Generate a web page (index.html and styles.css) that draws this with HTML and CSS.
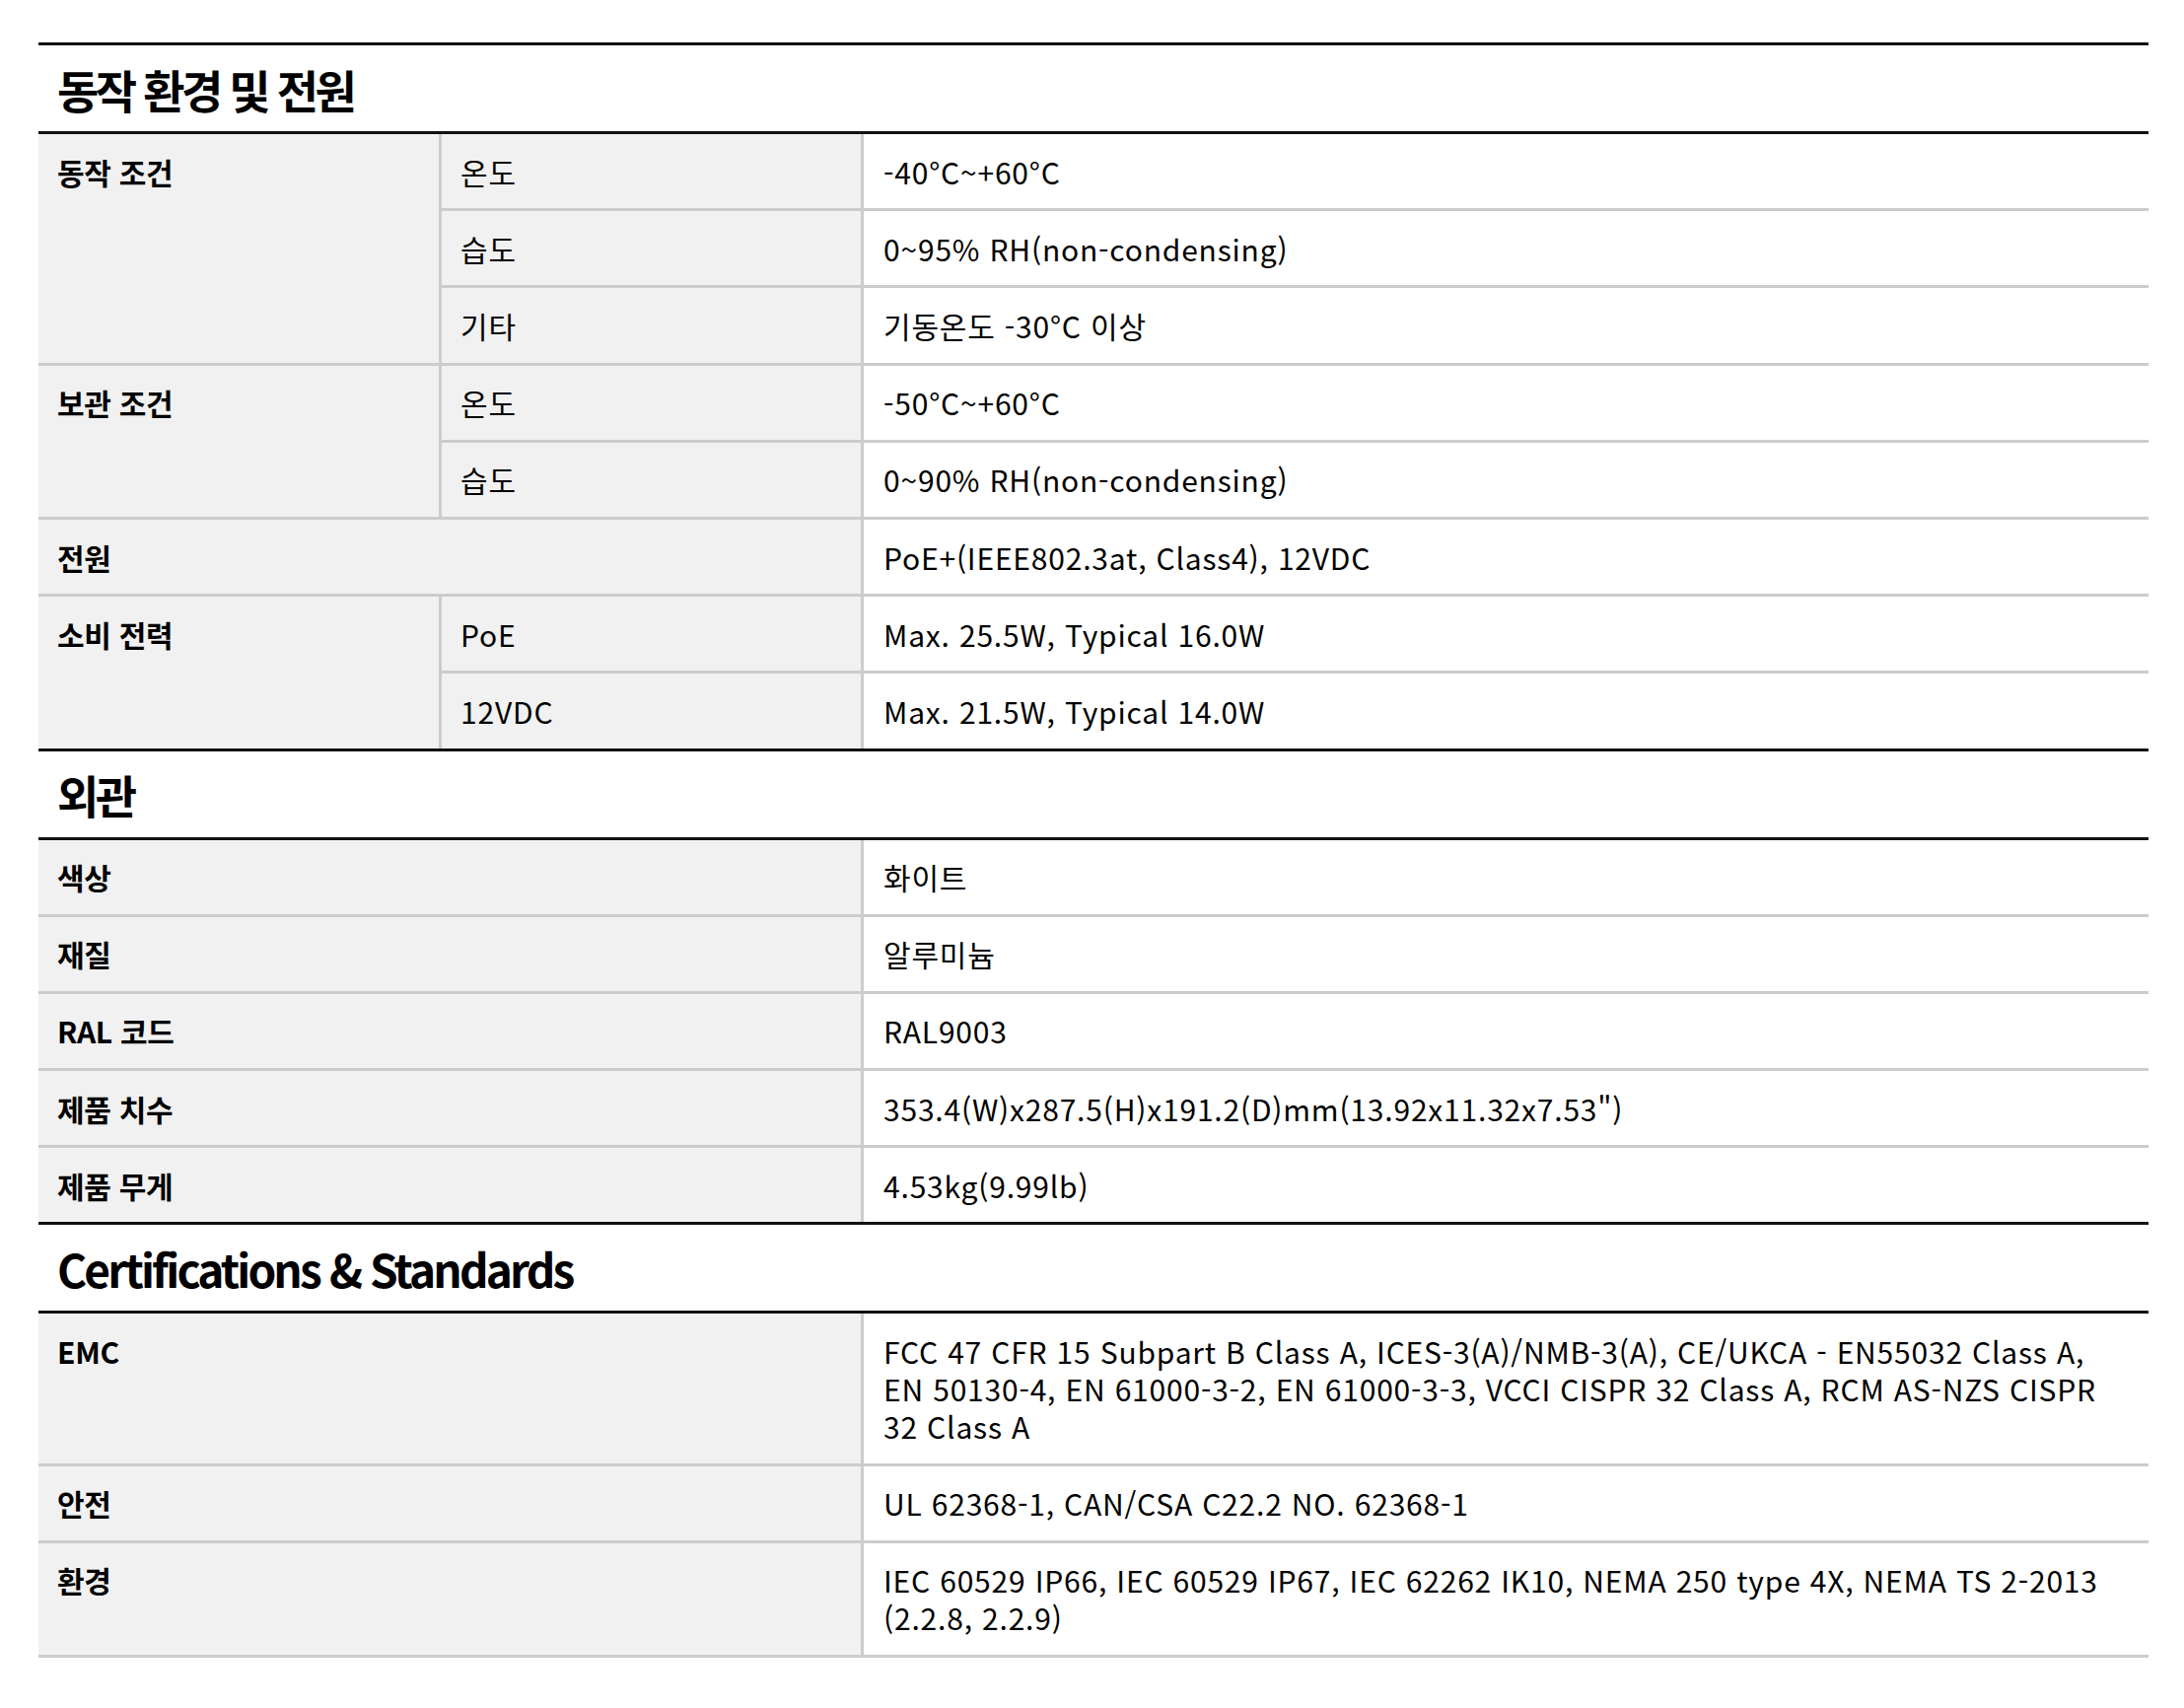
FILE: index.html
```html
<!DOCTYPE html>
<html lang="ko">
<head>
<meta charset="utf-8">
<title>사양</title>
<link rel="stylesheet" href="styles.css">
</head>
<body>
<main class="spec-page">
  <section class="spec-section">
    <h2 class="spec-title">동작 환경 및 전원</h2>
    <table class="spec-table">
      <colgroup><col class="c-main"><col class="c-sub"><col class="c-val"></colgroup>
      <tr><td class="lbl" rowspan="3">동작 조건</td><td class="sub">온도</td><td class="val">-40°C~+60°C</td></tr>
      <tr><td class="sub">습도</td><td class="val">0~95% RH(non-condensing)</td></tr>
      <tr><td class="sub">기타</td><td class="val">기동온도 -30°C 이상</td></tr>
      <tr><td class="lbl" rowspan="2">보관 조건</td><td class="sub">온도</td><td class="val">-50°C~+60°C</td></tr>
      <tr><td class="sub">습도</td><td class="val">0~90% RH(non-condensing)</td></tr>
      <tr><td class="lbl" colspan="2">전원</td><td class="val">PoE+(IEEE802.3at, Class4), 12VDC</td></tr>
      <tr><td class="lbl" rowspan="2">소비 전력</td><td class="sub">PoE</td><td class="val">Max. 25.5W, Typical 16.0W</td></tr>
      <tr><td class="sub">12VDC</td><td class="val">Max. 21.5W, Typical 14.0W</td></tr>
    </table>
  </section>
  <section class="spec-section">
    <h2 class="spec-title">외관</h2>
    <table class="spec-table">
      <colgroup><col class="c-main"><col class="c-sub"><col class="c-val"></colgroup>
      <tr><td class="lbl" colspan="2">색상</td><td class="val">화이트</td></tr>
      <tr><td class="lbl" colspan="2">재질</td><td class="val">알루미늄</td></tr>
      <tr><td class="lbl" colspan="2">RAL 코드</td><td class="val">RAL9003</td></tr>
      <tr><td class="lbl" colspan="2">제품 치수</td><td class="val">353.4(W)x287.5(H)x191.2(D)mm(13.92x11.32x7.53")</td></tr>
      <tr><td class="lbl" colspan="2">제품 무게</td><td class="val">4.53kg(9.99lb)</td></tr>
    </table>
  </section>
  <section class="spec-section last">
    <h2 class="spec-title latin">Certifications &amp; Standards</h2>
    <table class="spec-table">
      <colgroup><col class="c-main"><col class="c-sub"><col class="c-val"></colgroup>
      <tr><td class="lbl" colspan="2">EMC</td><td class="val">FCC 47 CFR 15 Subpart B Class A, ICES-3(A)/NMB-3(A), CE/UKCA - EN55032 Class A, EN 50130-4, EN 61000-3-2, EN 61000-3-3, VCCI CISPR 32 Class A, RCM AS-NZS CISPR 32 Class A</td></tr>
      <tr><td class="lbl" colspan="2">안전</td><td class="val">UL 62368-1, CAN/CSA C22.2 NO. 62368-1</td></tr>
      <tr><td class="lbl" colspan="2">환경</td><td class="val">IEC 60529 IP66, IEC 60529 IP67, IEC 62262 IK10, NEMA 250 type 4X, NEMA TS 2-2013 (2.2.8, 2.2.9)</td></tr>
    </table>
  </section>
</main>
</body>
</html>
```

FILE: styles.css
```css
html, body {
  margin: 0;
  padding: 0;
  background: #ffffff;
}

body {
  font-family: "Noto Sans CJK KR", "Noto Sans", sans-serif;
  color: #000000;
}

.spec-page {
  width: 2140px;
  padding: 43px 36px 40px 39px;
}

.spec-title {
  margin: 0;
  height: 87px;
  display: flex;
  align-items: center;
  padding-left: 19px;
  border-top: 3px solid #111111;
  font-size: 46px;
  font-weight: 700;
  letter-spacing: -0.075em;
  color: #000000;
}

.spec-title.latin {
  letter-spacing: -0.062em;
}

.spec-table {
  width: 100%;
  table-layout: fixed;
  border-collapse: separate;
  border-spacing: 0;
  border-top: 3px solid #111111;
}

.spec-section.last .spec-table {
  border-bottom: 3px solid #cccccc;
}

.c-main { width: 406px; }
.c-sub { width: 428px; }

.spec-table td {
  box-sizing: border-box;
  padding: 18.6px 30px 18.6px 19px;
  font-size: 30px;
  line-height: 38px;
  letter-spacing: 0.8px;
  vertical-align: top;
  text-align: left;
}

.spec-table tr + tr > td {
  border-top: 3px solid #cccccc;
}

.spec-table .lbl {
  background: #f1f1f1;
  font-weight: 700;
  letter-spacing: -0.3px;
}

.spec-table .sub {
  background: #f1f1f1;
  border-left: 3px solid #cccccc;
}

.spec-table .val {
  background: #ffffff;
  border-left: 3px solid #cccccc;
  padding-left: 20px;
}
```
